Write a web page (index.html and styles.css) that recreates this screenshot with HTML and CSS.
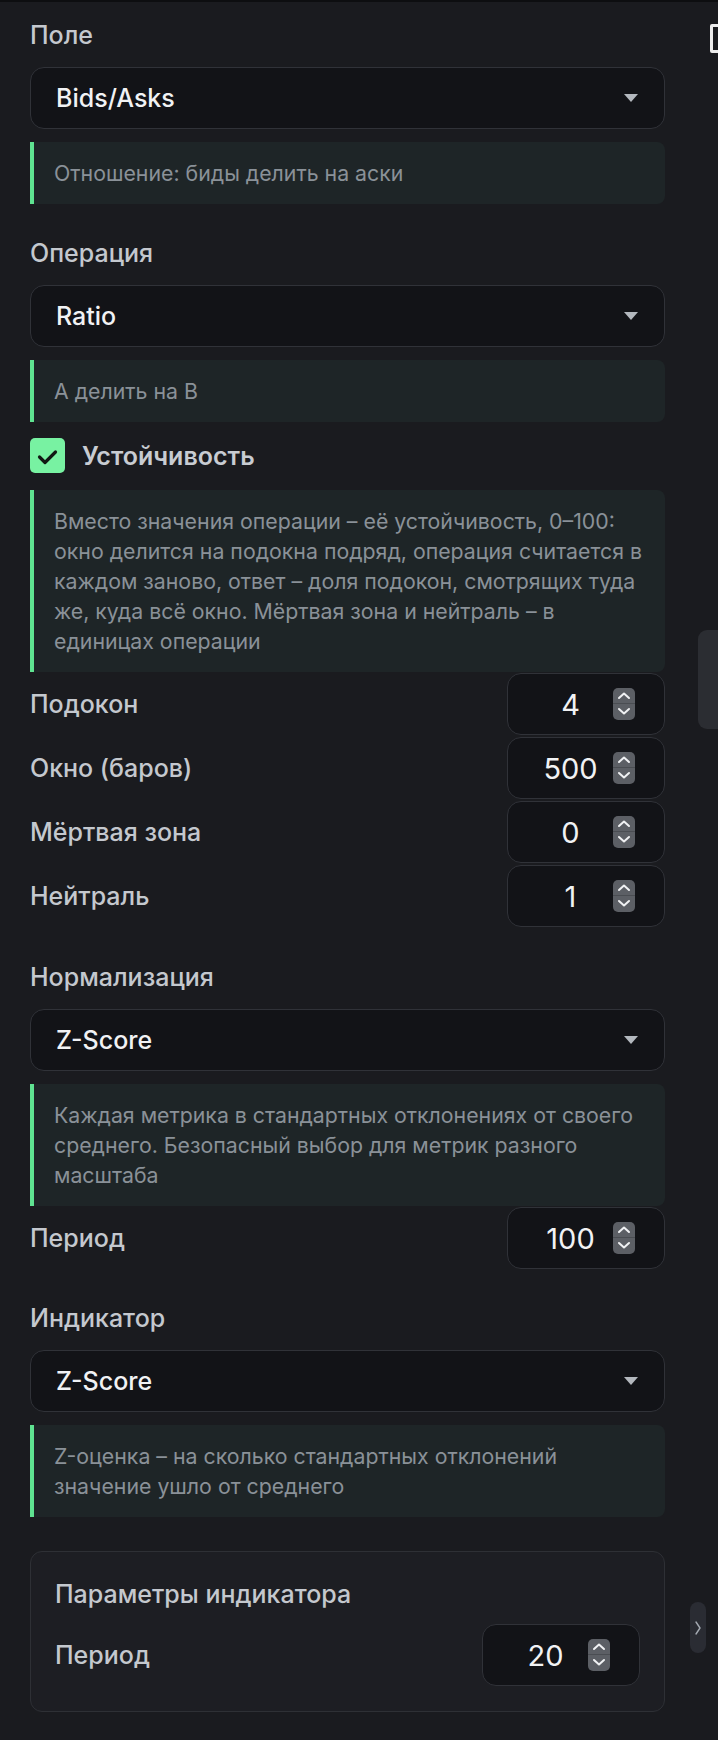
FILE: index.html
```html
<!DOCTYPE html>
<html>
<head>
<meta charset="utf-8">
<title>Параметры метрики</title>
<link rel="stylesheet" href="styles.css">
</head>
<body>

	<div class="corner-icon"></div>
	<div class="scroll-thumb"></div>
	<div class="collapse"><svg width="8" height="16" viewBox="0 0 8 16"><path d="M2 2 L6 8 L2 14" stroke="#a3a9b1" stroke-width="1.4" fill="none" stroke-linecap="round" stroke-linejoin="round"/></svg></div>

	<div class="panel">

		<div class="section">
			<div class="label">Поле</div>
			<div class="select">Bids/Asks<span class="arrow"></span></div>
			<div class="hint">Отношение: биды делить на аски</div>
		</div>

		<div class="section">
			<div class="label">Операция</div>
			<div class="select">Ratio<span class="arrow"></span></div>
			<div class="hint">A делить на B</div>
		</div>

		<div class="check-row">
			<div class="checkbox">
				<svg width="35" height="35" viewBox="0 0 35 35"><path d="M9.5 19 L15 24.5 L25.5 14" stroke="#111813" stroke-width="3.2" fill="none" stroke-linecap="round" stroke-linejoin="round"/></svg>
			</div>
			<div class="check-label">Устойчивость</div>
		</div>

		<div class="hint">Вместо значения операции – её устойчивость, 0–100: окно делится на подокна подряд, операция считается в каждом заново, ответ – доля подокон, смотрящих туда же, куда всё окно. Мёртвая зона и нейтраль – в единицах операции</div>

		<div class="rows">
			<div class="row">
				<div class="row-label">Подокон</div>
				<div class="number"><span class="value">4</span><svg class="spin" width="22" height="32" viewBox="0 0 22 32"><rect width="22" height="32" rx="5" fill="#5c5f65"/><line x1="0" y1="15.5" x2="22" y2="15.5" stroke="#4a4d52" stroke-width="1"/><path d="M6 10 L11 5.5 L16 10" stroke="#f0f1f3" stroke-width="2" fill="none" stroke-linecap="round" stroke-linejoin="round"/><path d="M6 21 L11 25.5 L16 21" stroke="#f0f1f3" stroke-width="2" fill="none" stroke-linecap="round" stroke-linejoin="round"/></svg></div>
			</div>
			<div class="row">
				<div class="row-label">Окно (баров)</div>
				<div class="number"><span class="value">500</span><svg class="spin" width="22" height="32" viewBox="0 0 22 32"><rect width="22" height="32" rx="5" fill="#5c5f65"/><line x1="0" y1="15.5" x2="22" y2="15.5" stroke="#4a4d52" stroke-width="1"/><path d="M6 10 L11 5.5 L16 10" stroke="#f0f1f3" stroke-width="2" fill="none" stroke-linecap="round" stroke-linejoin="round"/><path d="M6 21 L11 25.5 L16 21" stroke="#f0f1f3" stroke-width="2" fill="none" stroke-linecap="round" stroke-linejoin="round"/></svg></div>
			</div>
			<div class="row">
				<div class="row-label">Мёртвая зона</div>
				<div class="number"><span class="value">0</span><svg class="spin" width="22" height="32" viewBox="0 0 22 32"><rect width="22" height="32" rx="5" fill="#5c5f65"/><line x1="0" y1="15.5" x2="22" y2="15.5" stroke="#4a4d52" stroke-width="1"/><path d="M6 10 L11 5.5 L16 10" stroke="#f0f1f3" stroke-width="2" fill="none" stroke-linecap="round" stroke-linejoin="round"/><path d="M6 21 L11 25.5 L16 21" stroke="#f0f1f3" stroke-width="2" fill="none" stroke-linecap="round" stroke-linejoin="round"/></svg></div>
			</div>
			<div class="row">
				<div class="row-label">Нейтраль</div>
				<div class="number"><span class="value">1</span><svg class="spin" width="22" height="32" viewBox="0 0 22 32"><rect width="22" height="32" rx="5" fill="#5c5f65"/><line x1="0" y1="15.5" x2="22" y2="15.5" stroke="#4a4d52" stroke-width="1"/><path d="M6 10 L11 5.5 L16 10" stroke="#f0f1f3" stroke-width="2" fill="none" stroke-linecap="round" stroke-linejoin="round"/><path d="M6 21 L11 25.5 L16 21" stroke="#f0f1f3" stroke-width="2" fill="none" stroke-linecap="round" stroke-linejoin="round"/></svg></div>
			</div>
		</div>

		<div class="section section-gap">
			<div class="label">Нормализация</div>
			<div class="select">Z-Score<span class="arrow"></span></div>
			<div class="hint">Каждая метрика в стандартных отклонениях от своего среднего. Безопасный выбор для метрик разного масштаба</div>
			<div class="row row-after">
				<div class="row-label">Период</div>
				<div class="number"><span class="value">100</span><svg class="spin" width="22" height="32" viewBox="0 0 22 32"><rect width="22" height="32" rx="5" fill="#5c5f65"/><line x1="0" y1="15.5" x2="22" y2="15.5" stroke="#4a4d52" stroke-width="1"/><path d="M6 10 L11 5.5 L16 10" stroke="#f0f1f3" stroke-width="2" fill="none" stroke-linecap="round" stroke-linejoin="round"/><path d="M6 21 L11 25.5 L16 21" stroke="#f0f1f3" stroke-width="2" fill="none" stroke-linecap="round" stroke-linejoin="round"/></svg></div>
			</div>
		</div>

		<div class="section section-gap">
			<div class="label">Индикатор</div>
			<div class="select">Z-Score<span class="arrow"></span></div>
			<div class="hint">Z-оценка – на сколько стандартных отклонений значение ушло от среднего</div>
		</div>

		<div class="card">
			<div class="card-title">Параметры индикатора</div>
			<div class="row">
				<div class="row-label">Период</div>
				<div class="number"><span class="value">20</span><svg class="spin" width="22" height="32" viewBox="0 0 22 32"><rect width="22" height="32" rx="5" fill="#5c5f65"/><line x1="0" y1="15.5" x2="22" y2="15.5" stroke="#4a4d52" stroke-width="1"/><path d="M6 10 L11 5.5 L16 10" stroke="#f0f1f3" stroke-width="2" fill="none" stroke-linecap="round" stroke-linejoin="round"/><path d="M6 21 L11 25.5 L16 21" stroke="#f0f1f3" stroke-width="2" fill="none" stroke-linecap="round" stroke-linejoin="round"/></svg></div>
			</div>
		</div>

	</div>
</body>
</html>
```

FILE: styles.css
```css
body
   {
	margin			:  0 ;
	background		:  #1a1b1f ;
	border-top		:  2px solid #0d0e10 ;
	font-family		:  Inter, "Noto Sans", sans-serif ;
	min-height		:  1738px ;
	position		:  relative ;
	overflow		:  hidden ;
    }

.panel
   {
	width			:  635px ;
	padding			:  19px 0 0 30px ;
    }

.section
   {
	margin-bottom		:  16px ;
    }

.section + .section
   {
	margin-top		:  35px ;
    }

.section-gap
   {
	margin-top		:  36px ;
    }

.label
   {
	font-size		:  25px ;
	line-height		:  28px ;
	font-weight		:  500 ;
	color			:  #c4c8ce ;
	margin-bottom		:  18px ;
    }

.select
   {
	height			:  60px ;
	border			:  1px solid #303238 ;
	border-radius		:  14px ;
	background		:  #121317 ;
	padding			:  0 26px 0 25px ;
	display			:  flex ;
	align-items		:  center ;
	justify-content		:  space-between ;
	font-size		:  25px ;
	font-weight		:  500 ;
	color			:  #f1f2f4 ;
	margin-bottom		:  13px ;
    }

.arrow
   {
	width			:  0 ;
	height			:  0 ;
	border-left		:  7.5px solid transparent ;
	border-right		:  7.5px solid transparent ;
	border-top		:  8px solid #b3b8be ;
    }

.hint
   {
	background		:  #1e2527 ;
	border-left		:  4px solid #5fe391 ;
	border-radius		:  0 8px 8px 0 ;
	padding			:  16px 14px 16px 20px ;
	font-size		:  21.3px ;
	line-height		:  30px ;
	color			:  #8a9198 ;
    }

.check-row
   {
	display			:  flex ;
	align-items		:  center ;
	gap			:  17px ;
	margin-bottom		:  17px ;
    }

.checkbox
   {
	width			:  35px ;
	height			:  35px ;
	border-radius		:  5px ;
	background		:  #78f2a2 ;
    }

.checkbox svg
   {
	display			:  block ;
    }

.check-label
   {
	font-size		:  25px ;
	font-weight		:  600 ;
	color			:  #c8ccd2 ;
    }

.rows
   {
	margin-top		:  1px ;
	display			:  flex ;
	flex-direction		:  column ;
	gap			:  2px ;
    }

.row
   {
	display			:  flex ;
	align-items		:  center ;
	justify-content		:  space-between ;
    }

.row-after
   {
	margin-top		:  1px ;
    }

.row-label
   {
	font-size		:  25px ;
	font-weight		:  500 ;
	color			:  #c4c8ce ;
    }

.number
   {
	width			:  156px ;
	height			:  60px ;
	border			:  1px solid #303238 ;
	border-radius		:  14px ;
	background		:  #121317 ;
	display			:  flex ;
	align-items		:  center ;
    }

.value
   {
	flex			:  1 ;
	text-align		:  center ;
	padding-left		:  24px ;
	margin-right		:  4px ;
	font-size		:  29px ;
	color			:  #f1f2f4 ;
    }

.spin
   {
	margin-right		:  29px ;
    }

.card
   {
	margin-top		:  34px ;
	border			:  1px solid #2e3035 ;
	border-radius		:  12px ;
	background		:  #1d1e23 ;
	padding			:  28px 24px 25px 24px ;
    }

.card-title
   {
	font-size		:  25px ;
	line-height		:  28px ;
	font-weight		:  500 ;
	color			:  #c4c8ce ;
	margin-bottom		:  16px ;
    }

.corner-icon
   {
	position		:  absolute ;
	top			:  22px ;
	left			:  710px ;
	width			:  18px ;
	height			:  23px ;
	border			:  3px solid #ececec ;
	border-radius		:  2px ;
    }

.scroll-thumb
   {
	position		:  absolute ;
	top			:  628px ;
	left			:  698px ;
	width			:  30px ;
	height			:  99px ;
	border-radius		:  9px ;
	background		:  #2b2d32 ;
    }

.collapse
   {
	position		:  absolute ;
	top			:  1600px ;
	left			:  690px ;
	width			:  16px ;
	height			:  51px ;
	border-radius		:  8px ;
	background		:  #2a2c33 ;
	display			:  flex ;
	align-items		:  center ;
	justify-content		:  center ;
    }
```
